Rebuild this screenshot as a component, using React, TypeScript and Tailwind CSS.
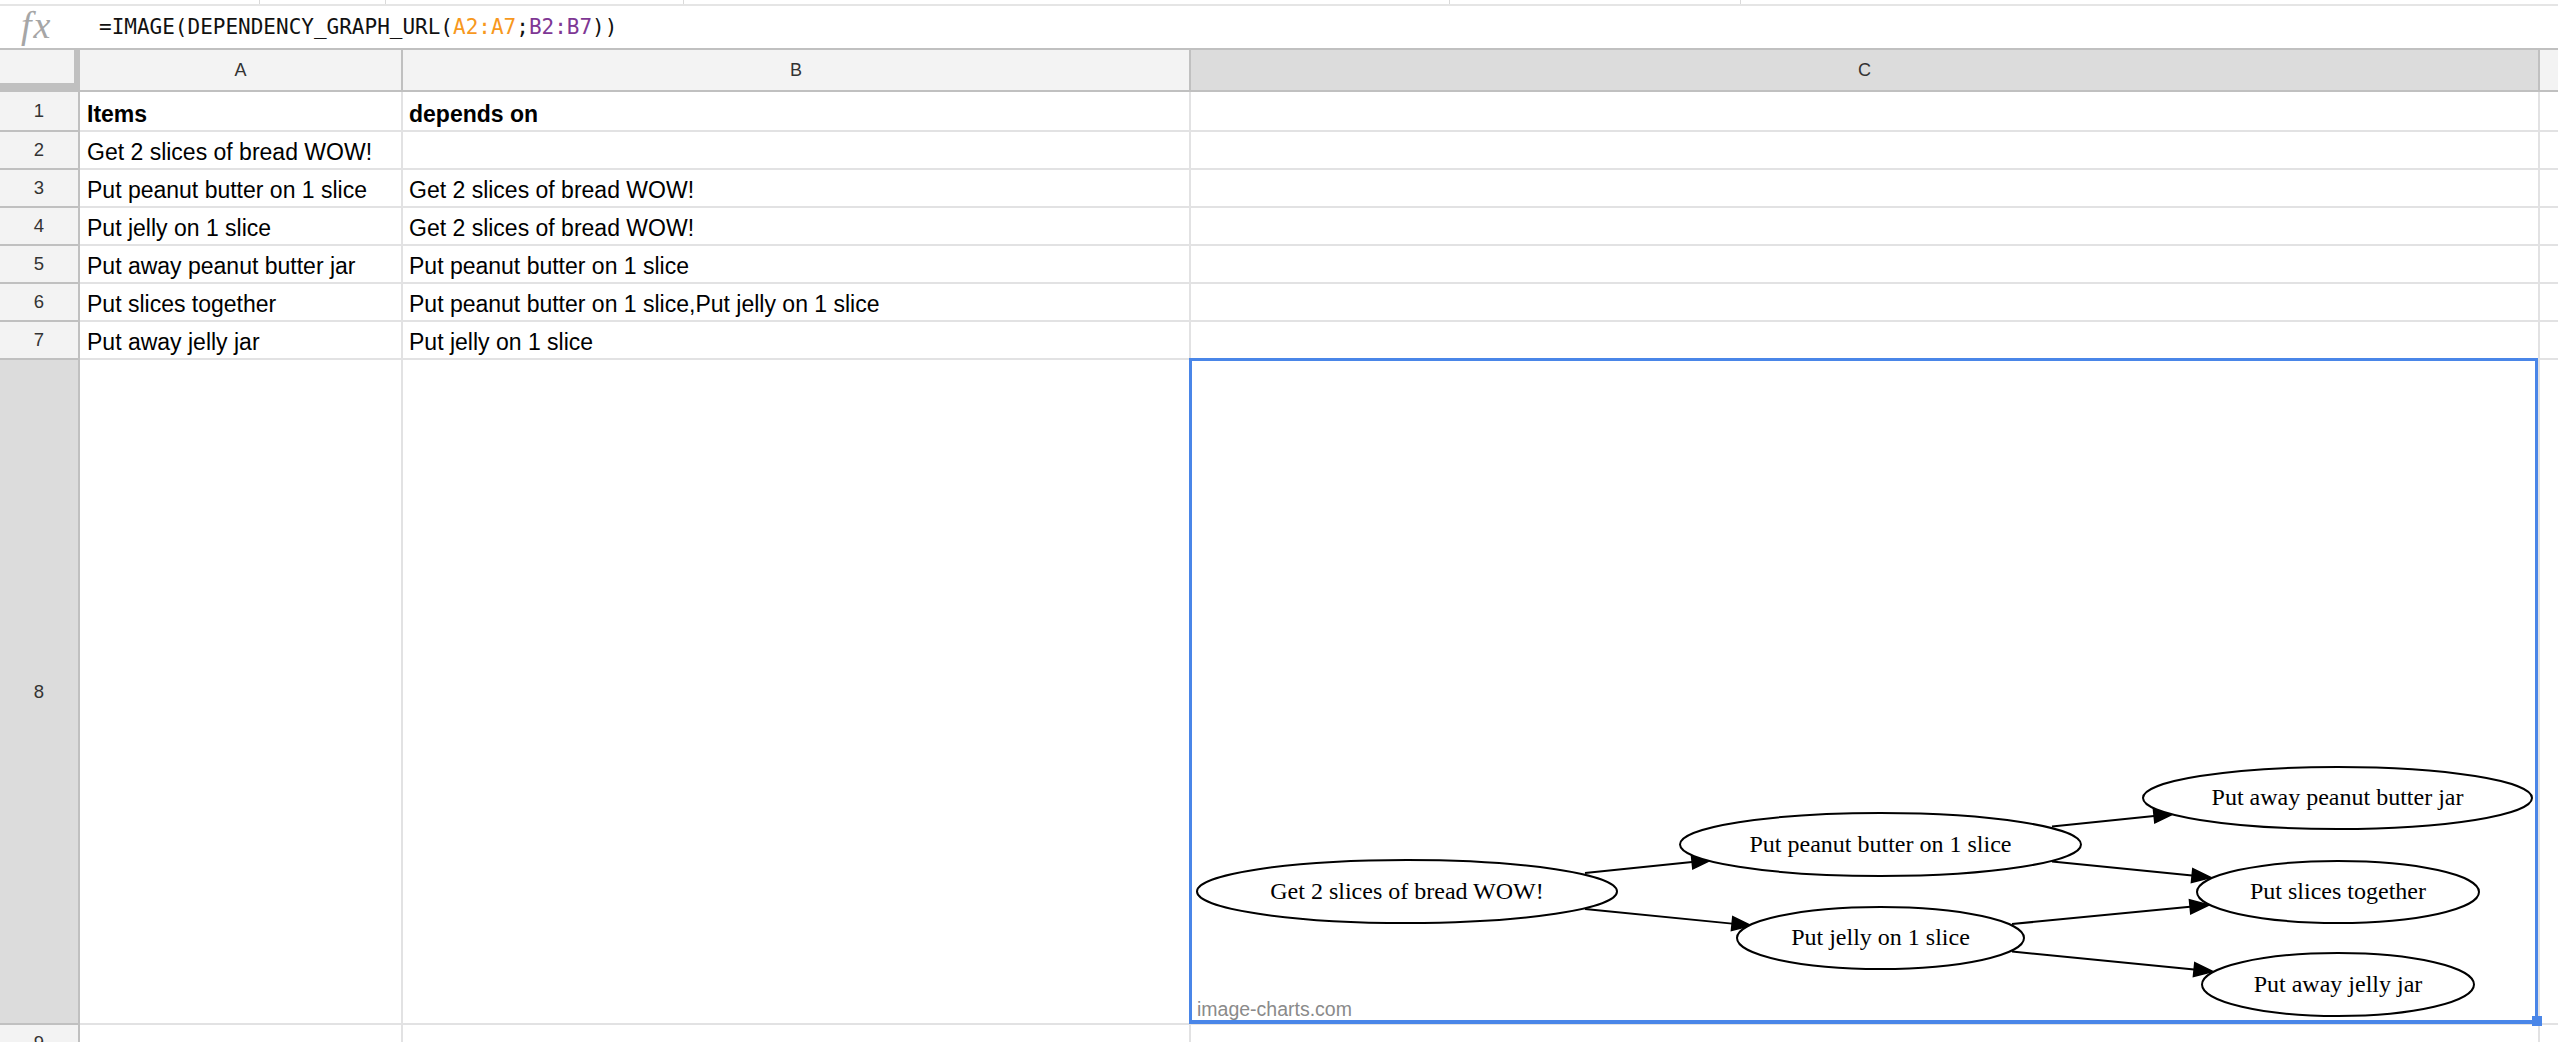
const ITEMS = [
  ["Items", "depends on"],
  ["Get 2 slices of bread WOW!", ""],
  ["Put peanut butter on 1 slice", "Get 2 slices of bread WOW!"],
  ["Put jelly on 1 slice", "Get 2 slices of bread WOW!"],
  ["Put away peanut butter jar", "Put peanut butter on 1 slice"],
  ["Put slices together", "Put peanut butter on 1 slice,Put jelly on 1 slice"],
  ["Put away jelly jar", "Put jelly on 1 slice"],
];

const NODES = [
  { label: "Get 2 slices of bread WOW!", cx: 1407, cy: 891.5, rx: 210, ry: 31.5 },
  { label: "Put peanut butter on 1 slice", cx: 1880.5, cy: 844.5, rx: 200.5, ry: 31.5 },
  { label: "Put jelly on 1 slice", cx: 1880.5, cy: 938, rx: 143.5, ry: 31 },
  { label: "Put away peanut butter jar", cx: 2337.5, cy: 798, rx: 194.5, ry: 31 },
  { label: "Put slices together", cx: 2338, cy: 892, rx: 141, ry: 31 },
  { label: "Put away jelly jar", cx: 2338, cy: 984.5, rx: 136, ry: 31.5 },
];

// [startX, startY, tipX, tipY]
const EDGES = [
  [1585, 873, 1711, 860],
  [1585, 909, 1751, 925.5],
  [2052, 826.5, 2173, 814],
  [2052, 861.5, 2211, 877.5],
  [2012, 924, 2209, 905],
  [2012, 951.5, 2213, 971.5],
];

function Arrow({ edge }: { edge: number[] }) {
  const [x1, y1, x2, y2] = edge;
  const len = Math.hypot(x2 - x1, y2 - y1);
  const ux = (x2 - x1) / len;
  const uy = (y2 - y1) / len;
  const bx = x2 - ux * 19;
  const by = y2 - uy * 19;
  const nx = -uy * 7;
  const ny = ux * 7;
  return (
    <g>
      <line x1={x1} y1={y1} x2={bx} y2={by} stroke="black" strokeWidth={2} />
      <polygon
        points={`${x2},${y2} ${bx + nx},${by + ny} ${bx - nx},${by - ny}`}
        fill="black"
        stroke="black"
        strokeWidth={1.5}
      />
    </g>
  );
}

function DependencyGraph() {
  return (
    <svg width={1347} height={663} viewBox="1191 360 1347 663" className="block">
      {EDGES.map((e, i) => (
        <Arrow key={i} edge={e} />
      ))}
      {NODES.map((n) => (
        <g key={n.label}>
          <ellipse cx={n.cx} cy={n.cy} rx={n.rx} ry={n.ry} fill="white" stroke="black" strokeWidth={2} />
          <text
            x={n.cx}
            y={n.cy + 7}
            textAnchor="middle"
            fontFamily="'Liberation Serif', 'Times New Roman', serif"
            fontSize={24}
            fill="black"
          >
            {n.label}
          </text>
        </g>
      ))}
      <text x={1197} y={1016} fontFamily="'Liberation Sans', Arial, sans-serif" fontSize={19.5} fill="#8a8a8a">
        image-charts.com
      </text>
    </svg>
  );
}

function RowHeader({ n, h, selected }: { n: number; h: string; selected?: boolean }) {
  return (
    <div
      className={`${h} w-[80px] shrink-0 flex items-center justify-center border-r-2 border-b-2 border-[#c0c0c0] text-[18.5px] text-[#333] ${
        selected ? "bg-[#dcdcdc]" : "bg-[#f3f3f3]"
      }`}
    >
      {n}
    </div>
  );
}

function App() {
  return (
    <div className="w-[2558px] h-[1042px] overflow-hidden bg-white font-['Liberation_Sans',Arial,sans-serif] text-black">
      {/* toolbar remnant */}
      <div className="flex h-[6px] border-b-2 border-[#e5e5e5]">
        <div className="w-[260px] border-r border-[#dadada]" />
        <div className="w-[126px] border-r border-[#dadada]" />
        <div className="w-[298px] border-r border-[#dadada]" />
        <div className="w-[766px] border-r border-[#dadada]" />
        <div className="w-[291px] border-r border-[#dadada]" />
      </div>

      {/* formula bar */}
      <div className="flex h-[42px] items-center">
        <div className="w-[99px] pl-[21px] pb-[4px] font-['Liberation_Serif',serif] italic text-[38px] leading-none tracking-[2px] text-[#a6a6a6]">
          fx
        </div>
        <div className="font-['DejaVu_Sans_Mono',monospace] text-[21px] leading-none text-[#111]">
          =IMAGE(DEPENDENCY_GRAPH_URL(<span className="text-[#f7981d]">A2:A7</span>;
          <span className="text-[#7e3794]">B2:B7</span>))
        </div>
      </div>

      {/* column headers */}
      <div className="flex h-[44px] border-t-2 border-[#c0c0c0] text-[18px] text-[#333]">
        <div className="w-[80px] shrink-0 bg-[#f3f3f3] border-r-[6px] border-b-[9px] border-[#c0c0c0]" />
        <div className="w-[323px] shrink-0 flex items-center justify-center bg-[#f3f3f3] border-r-2 border-b-2 border-[#c0c0c0]">
          A
        </div>
        <div className="w-[788px] shrink-0 flex items-center justify-center bg-[#f3f3f3] border-r-2 border-b-2 border-[#c0c0c0]">
          B
        </div>
        <div className="w-[1349px] shrink-0 flex items-center justify-center bg-[#dcdcdc] border-r-2 border-b-2 border-[#c0c0c0]">
          C
        </div>
        <div className="flex-1 bg-[#f3f3f3] border-b-2 border-[#c0c0c0]" />
      </div>

      {/* rows 1-7 */}
      {ITEMS.map(([a, b], i) => {
        const h = i === 0 ? "h-[40px]" : "h-[38px]";
        const weight = i === 0 ? "font-bold" : "";
        return (
          <div key={i} className="flex text-[23px] leading-[26px]">
            <RowHeader n={i + 1} h={h} />
            <div className={`${h} ${weight} w-[323px] shrink-0 flex items-end pb-[3px] pl-[7px] border-r-2 border-b-2 border-[#e2e2e3] whitespace-nowrap`}>
              {a}
            </div>
            <div className={`${h} ${weight} w-[788px] shrink-0 flex items-end pb-[3px] pl-[6px] border-r-2 border-b-2 border-[#e2e2e3] whitespace-nowrap`}>
              {b}
            </div>
            <div className={`${h} w-[1349px] shrink-0 border-r-2 border-b-2 border-[#e2e2e3]`} />
            <div className={`${h} flex-1 border-b-2 border-[#e2e2e3]`} />
          </div>
        );
      })}

      {/* row 8 with chart */}
      <div className="flex">
        <RowHeader n={8} h="h-[665px]" selected />
        <div className="h-[665px] w-[323px] shrink-0 border-r-2 border-b-2 border-[#e2e2e3]" />
        <div className="h-[665px] w-[788px] shrink-0 border-r-2 border-b-2 border-[#e2e2e3]" />
        <div className="relative h-[665px] w-[1349px] shrink-0 border-r-2 border-b-2 border-[#e2e2e3]">
          <DependencyGraph />
          <div className="absolute -left-[2px] -top-[2px] right-0 -bottom-[1px] z-10 border-x-[3px] border-t-[3px] border-b-4 border-[#4a86e8]" />
          <div className="absolute -right-[4px] -bottom-[3px] z-10 w-[10px] h-[10px] bg-[#4a86e8]" />
        </div>
        <div className="h-[665px] flex-1 border-b-2 border-[#e2e2e3]" />
      </div>

      {/* row 9 */}
      <div className="flex">
        <RowHeader n={9} h="h-[38px]" />
        <div className="h-[38px] w-[323px] shrink-0 border-r-2 border-[#e2e2e3]" />
        <div className="h-[38px] w-[788px] shrink-0 border-r-2 border-[#e2e2e3]" />
        <div className="h-[38px] w-[1349px] shrink-0 border-r-2 border-[#e2e2e3]" />
        <div className="h-[38px] flex-1" />
      </div>
    </div>
  );
}

export default App;
